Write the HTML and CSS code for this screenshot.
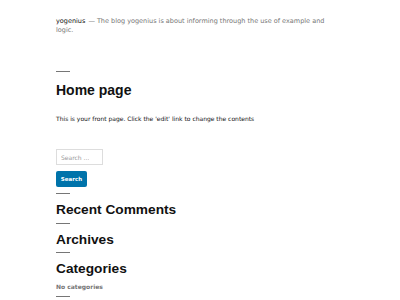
FILE: index.html
```html
<!DOCTYPE html>
<html lang="en">
<head>
  <meta charset="UTF-8">
  <meta name="viewport" content="width=device-width, initial-scale=1.0">
  <title>yogenius</title>
  <link rel="stylesheet" href="styles.css">
</head>
<body>
  <div class="site">
    <header class="site-header">
      <p class="site-branding"><span class="site-title">yogenius</span><span class="sep">&mdash;</span>The blog yogenius is about informing through the use of example and logic.</p>
    </header>

    <main class="content">
      <article class="entry">
        <hr class="rule">
        <h1 class="entry-title">Home page</h1>
        <p class="entry-text">This is your front page. Click the 'edit' link to change the contents</p>
      </article>

      <aside class="widgets">
        <form class="search-form">
          <input type="search" class="search-field" placeholder="Search &hellip;">
          <button type="button" class="search-submit">Search</button>
        </form>
        <section class="widget">
          <hr class="rule">
          <h2 class="widget-title">Recent Comments</h2>
        </section>
        <section class="widget">
          <hr class="rule">
          <h2 class="widget-title">Archives</h2>
        </section>
        <section class="widget">
          <hr class="rule">
          <h2 class="widget-title">Categories</h2>
          <p class="widget-text">No categories</p>
        </section>
        <section class="widget">
          <hr class="rule">
        </section>
      </aside>
    </main>
  </div>
</body>
</html>
```

FILE: styles.css
```css
body {
  margin: 0;
  background: #fff;
  color: #111;
  font-family: "DejaVu Sans", sans-serif;
}
.site {
  padding: 0 56px;
}
.site-header {
  padding-top: 17px;
}
.site-branding {
  max-width: 278px;
  margin: 0;
  font-size: 6.5px;
  line-height: 9px;
  color: #767676;
}
.site-title {
  color: #111;
}
.sep {
  display: inline-block;
  margin: 0 2px 0 3px;
}
.rule {
  width: 14px;
  height: 1px;
  margin: 0;
  border: 0;
  background: #767676;
}
.entry {
  margin-top: 36px;
}
.entry-title {
  font-family: "Liberation Sans", Arial, sans-serif;
  font-size: 14px;
  line-height: 17px;
  font-weight: bold;
  margin: 10px 0 0;
}
.entry-text {
  font-size: 6px;
  line-height: 9px;
  color: #111;
  margin: 15px 0 0;
}
.widgets {
  margin-top: 26px;
}
.search-form {
  display: flex;
  flex-direction: column;
  align-items: flex-start;
  gap: 6px;
  margin-bottom: 6px;
}
.search-field {
  box-sizing: border-box;
  width: 47px;
  height: 16px;
  padding: 0 4px;
  border: 1px solid #ddd;
  border-radius: 0;
  font-family: "DejaVu Sans", sans-serif;
  font-size: 6px;
  outline: none;
}
.search-field::placeholder {
  color: #999;
}
.search-submit {
  box-sizing: border-box;
  width: 31px;
  height: 16px;
  padding: 0;
  border: 0;
  border-radius: 2px;
  background: #0073aa;
  color: #fff;
  font-family: "DejaVu Sans", sans-serif;
  font-size: 5.5px;
  font-weight: bold;
}
.widget-title {
  font-family: "Liberation Sans", Arial, sans-serif;
  font-size: 13.7px;
  line-height: 17px;
  font-weight: bold;
  margin: 7px 0 4.5px;
}
.widget-text {
  font-size: 6px;
  font-weight: bold;
  color: #767676;
  line-height: 9px;
  margin: 1px 0 5px;
}
```
